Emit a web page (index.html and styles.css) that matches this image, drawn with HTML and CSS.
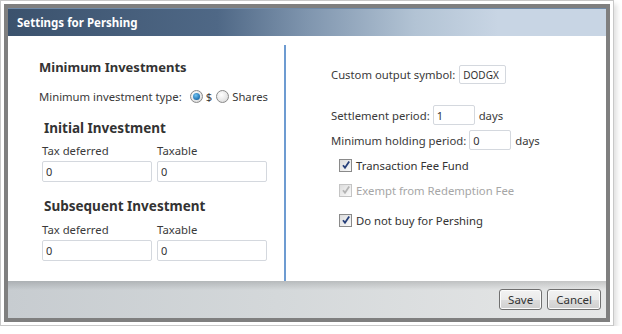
FILE: index.html
```html
<!DOCTYPE html>
<html lang="en">
<head>
    <meta charset="UTF-8">
    <meta name="viewport" content="width=device-width, initial-scale=1.0">
    <title>Settings for Pershing</title>
    <link rel="stylesheet" href="styles.css">
</head>
<body>
    <div class="frame">
        <div class="dialog">
            <div class="dialog-title">Settings for Pershing</div>
            <div class="dialog-body">
                <div class="col-left">
                    <h2>Minimum Investments</h2>
                    <div class="row type-row">
                        <span>Minimum investment type:</span>
                        <span class="radio checked"></span><span>$</span>
                        <span class="radio"></span><span>Shares</span>
                    </div>

                    <h3>Initial Investment</h3>
                    <div class="pair">
                        <div class="field">
                            <label>Tax deferred</label>
                            <input type="text" value="0">
                        </div>
                        <div class="field">
                            <label>Taxable</label>
                            <input type="text" value="0">
                        </div>
                    </div>

                    <h3 class="sub">Subsequent Investment</h3>
                    <div class="pair pair-sub">
                        <div class="field">
                            <label>Tax deferred</label>
                            <input type="text" value="0">
                        </div>
                        <div class="field">
                            <label>Taxable</label>
                            <input type="text" value="0">
                        </div>
                    </div>
                </div>

                <div class="col-right">
                    <div class="row symbol-row">
                        <span>Custom output symbol:</span>
                        <input type="text" class="symbol" value="DODGX">
                    </div>
                    <div class="row settle-row">
                        <span>Settlement period:</span>
                        <input type="text" class="small" value="1">
                        <span>days</span>
                    </div>
                    <div class="row hold-row">
                        <span>Minimum holding period:</span>
                        <input type="text" class="small" value="0">
                        <span>days</span>
                    </div>

                    <div class="check-row">
                        <span class="check"><svg viewBox="0 0 10 10" width="10" height="10"><path d="M2 5.2 L4 7.8 L8.2 1.6" /></svg></span>
                        <span>Transaction Fee Fund</span>
                    </div>
                    <div class="check-row disabled">
                        <span class="check"><svg viewBox="0 0 10 10" width="10" height="10"><path d="M2 5.2 L4 7.8 L8.2 1.6" /></svg></span>
                        <span>Exempt from Redemption Fee</span>
                    </div>
                    <div class="check-row last">
                        <span class="check"><svg viewBox="0 0 10 10" width="10" height="10"><path d="M2 5.2 L4 7.8 L8.2 1.6" /></svg></span>
                        <span>Do not buy for Pershing</span>
                    </div>
                </div>
            </div>
            <div class="dialog-footer">
                <button class="btn">Save</button>
                <button class="btn">Cancel</button>
            </div>
        </div>
    </div>
</body>
</html>
```

FILE: styles.css
```css
body {
    margin: 0;
    padding: 0;
    background: #fff;
    font-family: "Noto Sans", "Open Sans", sans-serif;
    font-size: 11.3px;
    color: #3a3a3a;
}

.frame {
    width: 606px;
    border: 1px solid #c8c8c8;
    padding: 3px;
    background: #fff;
    box-shadow: 3px 4px 5px rgba(0, 0, 0, 0.12);
}

.dialog {
    border: 4px solid #7f7f7f;
}

.dialog-title {
    height: 28px;
    line-height: 27px;
    padding-left: 9px;
    color: #fff;
    font-weight: bold;
    font-size: 11.5px;
    background: linear-gradient(to right, #3b526d 0%, #4f6886 35%, #7f95ae 50%, #b2c3d4 68%, #c8d5e4 82%, #c8d5e4 100%);
    border-top: 1px solid #6f8aa8;
    box-sizing: border-box;
}

.dialog-body {
    display: flex;
    height: 245px;
    padding-top: 9px;
    box-sizing: border-box;
    background: #fff;
}

.col-left {
    width: 276px;
    padding-left: 31px;
    box-sizing: border-box;
}

.col-right {
    flex: 1;
    border-left: 2px solid #6d9bd1;
    padding-left: 45px;
}

h2 {
    margin: 13px 0 0 0;
    font-size: 13px;
    line-height: 18px;
    color: #333;
}

h3 {
    margin: 14px 0 0 5px;
    font-size: 13.5px;
    line-height: 18px;
    color: #333;
}

h3.sub {
    margin-top: 15px;
}

.row {
    display: flex;
    align-items: center;
}

.type-row {
    margin-top: 11px;
    height: 18px;
}

.type-row > span:first-child {
    margin-right: 6px;
}

.radio {
    width: 11px;
    height: 11px;
    border-radius: 50%;
    border: 1px solid #8a8a8a;
    background: radial-gradient(circle at 40% 35%, #fff 0%, #e6e6e6 60%, #cfcfcf 100%);
    margin-right: 3px;
    margin-left: 2px;
    position: relative;
}

.radio + span + .radio {
    margin-left: 4px;
}

.radio.checked::after {
    content: "";
    position: absolute;
    left: 2px;
    top: 2px;
    width: 7px;
    height: 7px;
    border-radius: 50%;
    background: radial-gradient(circle at 40% 35%, #6fc3f2 0%, #1f6fae 70%, #164f80 100%);
}

.pair {
    display: flex;
    gap: 5px;
    margin-left: 3px;
    margin-top: 6px;
}

.pair-sub {
    margin-top: 7px;
}

.field {
    display: flex;
    flex-direction: column;
}

.field label {
    line-height: 16px;
    height: 16px;
    margin-bottom: 2px;
}

input {
    font-family: "Noto Sans", "Open Sans", sans-serif;
    font-size: 11px;
    color: #333;
    border: 1px solid #d4d8de;
    border-radius: 2px;
    padding: 0 3px;
    height: 21px;
    box-sizing: border-box;
    outline: none;
}

.field input {
    width: 110px;
}

input.symbol {
    width: 47px;
    height: 19px;
    font-size: 10px;
    margin-left: 4px;
}

input.small {
    width: 42px;
    height: 20px;
    margin: 0 4px 0 3px;
}

.symbol-row {
    margin-top: 20px;
    height: 19px;
}

.settle-row {
    margin-top: 21px;
    height: 20px;
}

.hold-row {
    margin-top: 5px;
    height: 20px;
}

.check-row {
    display: flex;
    align-items: center;
    margin-left: 8px;
    margin-top: 6px;
    height: 18px;
    color: #333;
}

.check-row.disabled {
    margin-top: 7px;
    color: #a6a6a6;
}

.check-row.last {
    margin-top: 12px;
}

.check {
    width: 11px;
    height: 11px;
    border: 1px solid #8a8a8a;
    background: linear-gradient(135deg, #dcdcdc, #fafafa);
    margin-right: 4px;
    display: flex;
    align-items: center;
    justify-content: center;
}

.check path {
    fill: none;
    stroke: #27407a;
    stroke-width: 1.8;
}

.check-row.disabled .check {
    border-color: #c4c4c4;
}

.check-row.disabled .check path {
    stroke: #b4b4b4;
}

.dialog-footer {
    height: 37px;
    display: flex;
    justify-content: flex-end;
    align-items: center;
    gap: 5px;
    padding-right: 5px;
    background:
        linear-gradient(to bottom, rgba(0, 0, 0, 0.14) 0px, rgba(0, 0, 0, 0) 9px),
        linear-gradient(to right, #c7ccd0 0%, #d4d8da 45%, #e6e7e7 100%);
}

.btn {
    font-family: "Noto Sans", "Open Sans", sans-serif;
    font-size: 11.5px;
    color: #333;
    height: 21px;
    padding: 0 8px;
    border: 1px solid #707070;
    border-radius: 3px;
    background: linear-gradient(to bottom, #f2f2f2 0%, #ebebeb 50%, #dddddd 51%, #cfcfcf 100%);
    box-shadow: inset 0 0 0 1px #fcfcfc;
}
```
